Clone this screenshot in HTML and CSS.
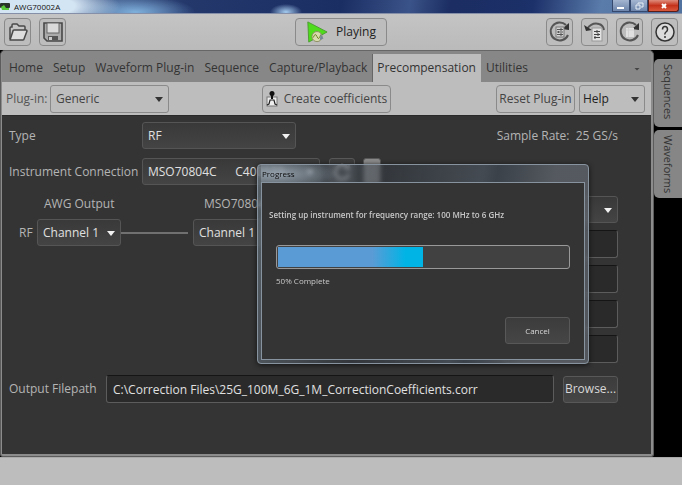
FILE: index.html
```html
<!DOCTYPE html>
<html lang="en">
<head>
<meta charset="utf-8">
<title>AWG70002A</title>
<link rel="stylesheet" href="styles.css">
</head>
<body>
<header class="titlebar">
  <svg class="app-icon" viewBox="0 0 10 9" aria-hidden="true"><rect y="1" width="10" height="5" rx="1" fill="#2a332a"/><path d="M1 5l3-2 2 3h3v2H2z" fill="#58c83a"/></svg>
  <span class="title">AWG70002A</span>
  <div class="caption">
    <button class="cap" aria-label="Minimize"><svg viewBox="0 0 10 8"><rect x="1" y="5" width="7" height="2" fill="#fff"/></svg></button>
    <button class="cap" aria-label="Restore"><svg viewBox="0 0 10 8"><path d="M4 2V1h5v4H7M2 3h4v4H2z" fill="none" stroke="#e8eef6"/></svg></button>
    <button class="cap cap-close" aria-label="Close"><svg viewBox="0 0 10 8"><path d="M3 2l4 4M7 2L3 6" stroke="#fff" stroke-width="2"/></svg></button>
  </div>
</header>

<div class="toolbar">
  <div class="tools">
    <button class="tool" aria-label="Open"><svg viewBox="0 0 24 24"><path d="M4 19V8q0-1 1-1h1V5q0-1 1-1h4l2 2h5q1 0 1 1v3" fill="#c6c6c6" stroke="#4a4a4a" stroke-width="1.5"/><path d="M4 20l3-9q0-1 1-1h12q1 0 1 1l-3 8q0 1-1 1z" fill="#dedede" stroke="#4a4a4a" stroke-width="1.5" stroke-linejoin="round"/></svg></button>
    <button class="tool" aria-label="Save"><svg viewBox="0 0 24 24"><path d="M3 3h18v18H6l-3-3z" fill="#aaa" stroke="#484848" stroke-width="1.6"/><rect x="6" y="3" width="12" height="10" fill="#dadada" stroke="#666"/><rect x="7" y="16" width="10" height="4" fill="#555"/><rect x="8" y="17" width="3" height="3" fill="#ccc"/></svg></button>
  </div>
  <button class="play"><svg viewBox="0 0 24 24"><path d="M2 1l21 11L3 23z" fill="#4fdc1c" stroke="#4a9a30"/><circle cx="12" cy="17" r="5.5" fill="#d9dcae" stroke="#8a8a60"/><path d="M8 18q2-6 4-1t4-2" fill="none" stroke="#67801a"/><path d="M16 14l3 5-4 2z" fill="#789"/></svg>Playing</button>
  <div class="tools tools-right">
    <button class="tool" aria-label="Restore setup"><svg viewBox="0 0 24 24"><path d="M18 5A9 9 0 1 0 20 15" fill="none" stroke="#555" stroke-width="2"/><path d="M14 9l7-6v7z" fill="#333"/><rect x="8" y="7" width="8" height="10" fill="#d4d4d4" stroke="#777"/><path d="M9 9.500h6M9 12h6M9 14.500h6M13 8v3M10.500 11v2M13 13v3" stroke="#555"/></svg></button>
    <button class="tool" aria-label="Last setup"><svg viewBox="0 0 24 24"><path d="M4 9Q9 2 16 4Q20 5 21 10" fill="none" stroke="#555" stroke-width="2"/><path d="M1 5l8 5-6 1z" fill="#333"/><rect x="9" y="8" width="10" height="13" fill="#e2e2e2" stroke="#999"/><path d="M11 11.500h6M11 14.500h6M11 17.500h6M14 10v3M15 13v3M12 16v3" stroke="#444"/></svg></button>
    <button class="tool" aria-label="Reset"><svg viewBox="0 0 24 24"><path d="M18 5A9 9 0 1 0 20 15" fill="none" stroke="#555" stroke-width="2"/><path d="M14 9l7-6v7z" fill="#333"/><rect x="8" y="8" width="8" height="9" fill="#e0e0e0"/><path d="M8 10h8M10.500 8v9" stroke="#d0d0d0"/></svg></button>
    <button class="tool" aria-label="Help"><svg viewBox="0 0 24 24"><circle cx="12" cy="12" r="9" fill="#dcdcdc" stroke="#333" stroke-width="1.500"/><path d="M9.500 9.500q0-3 2.500-3t2.500 3q0 1.500-1.500 2.500T12 14.500M12 16v2" fill="none" stroke="#333" stroke-width="1.500"/></svg></button>
  </div>
</div>

<div class="workspace">
  <main class="panel">
    <nav class="tabs">
      <a href="#">Home</a><a href="#">Setup</a><a href="#">Waveform Plug-in</a><a href="#">Sequence</a><a href="#">Capture/Playback</a><a href="#" class="active">Precompensation</a><a href="#">Utilities</a>
      <button class="more" aria-label="More tabs"></button>
    </nav>
    <div class="subbar">
      <label for="plugin">Plug-in:</label>
      <span class="select light plugin"><select id="plugin"><option>Generic</option></select></span>
      <button class="lbtn create"><svg viewBox="0 0 12 16"><rect x="1" y="6" width="10" height="9" fill="#eee" stroke="#777"/><circle cx="6" cy="2.500" r="2.500" fill="#111"/><path d="M6 4v4" stroke="#111" stroke-width="2"/><path d="M1 14l2-1 1-4h4l1 4 2 1" fill="none" stroke="#222" stroke-width="1.200"/></svg>Create coefficients</button>
      <button class="lbtn reset">Reset Plug-in</button>
      <span class="select light help"><select aria-label="Help"><option>Help</option></select></span>
    </div>
    <form class="content">
      <div class="row">
        <label class="lab" for="type">Type</label>
        <span class="select type"><select id="type"><option>RF</option></select></span>
        <span class="rate">Sample Rate:&nbsp; 25 GS/s</span>
      </div>
      <div class="row row-inst">
        <label class="lab" for="inst">Instrument Connection</label>
        <span class="select inst"><select id="inst"><option>MSO70804C &nbsp; &nbsp; &nbsp;C400123</option></select></span>
        <button type="button" class="dbtn refresh" aria-label="Refresh"><svg viewBox="0 0 20 20"><path d="M15 5A7 7 0 1 0 17 12" fill="none" stroke="#aaa" stroke-width="3"/><path d="M12 7l6-5v7z" fill="#aaa"/></svg></button>
        <button type="button" class="dbtn query" aria-label="Connection details"></button>
      </div>
      <div class="setup">
        <div class="channels">
          <span class="head head-awg">AWG Output</span>
          <span class="head head-mso">MSO70804C</span>
          <label class="rf" for="ch-a">RF</label>
          <span class="select"><select id="ch-a"><option>Channel 1</option></select></span>
          <span class="wire"></span>
          <span class="select"><select aria-label="MSO70804C channel"><option>Channel 1</option></select></span>
        </div>
        <div class="fields">
          <span class="select"><select aria-label="Mode"><option></option></select></span>
          <input type="text" aria-label="Start frequency">
          <input type="text" aria-label="Stop frequency">
          <input type="text" aria-label="Resolution">
          <input type="text" aria-label="Averages">
        </div>
      </div>
      <div class="row row-out">
        <label for="path">Output Filepath</label>
        <input id="path" type="text" value="C:\Correction Files\25G_100M_6G_1M_CorrectionCoefficients.corr">
        <button type="button" class="dbtn browse">Browse...</button>
      </div>
    </form>
    <section class="dialog" role="dialog" aria-labelledby="dlg">
      <h2 id="dlg">Progress</h2>
      <div class="dialog-body">
        <p class="message">Setting up instrument for frequency range: 100 MHz to 6 GHz</p>
        <div class="bar" role="progressbar" aria-valuenow="50" aria-valuemin="0" aria-valuemax="100"><div class="fill" style="width:50%"></div></div>
        <p class="percent">50% Complete</p>
        <button class="dbtn cancel">Cancel</button>
      </div>
    </section>
  </main>
  <aside class="rail"><button>Sequences</button><button>Waveforms</button></aside>
</div>
<footer class="status"></footer>
</body>
</html>
```
FILE: styles.css
```css
* { box-sizing: border-box; }
body {
  margin: 0;
  min-height: 100vh;
  display: flex;
  flex-direction: column;
  background: #bdbdbd;
  color: #333;
  font: 12px/18px "Open Sans", sans-serif;
}
button, input, select { font: inherit; color: inherit; margin: 0; }
button { white-space: nowrap; }
svg { display: block; flex: none; }

/* Window caption */
.titlebar {
  display: flex;
  align-items: center;
  height: 14px;
  border-bottom: 1px solid #8590a8;
  background:
    radial-gradient(ellipse 90px 24px at 30px 6px, #d3e4f2 50%, transparent),
    radial-gradient(ellipse 60px 16px at 135px 12px, #7fb0dc, transparent),
    radial-gradient(ellipse 16px 8px at 286px 12px, #a6cdf0, transparent),
    linear-gradient(100deg, #7394be 0, #24386c 27%, #1b2e64 50%, #3a5388 60%, #1b2d62 66%, #1c3069 78%, #5a7cab 88%, #51719f 100%);
}
.app-icon { width: 10px; height: 9px; }
.title { margin-left: 4px; font-size: 8px; line-height: 12px; color: #111; }
.caption { display: flex; margin-left: auto; align-self: flex-start; padding-right: 3px; }
.cap {
  display: flex;
  align-items: center;
  justify-content: center;
  width: 18px;
  height: 12px;
  padding: 0;
  border: 1px solid #35496e;
  border-top: 0;
  background: linear-gradient(#a3b5d0, #6d85ab);
}
.cap svg { width: 10px; height: 8px; }
.cap-close { width: 31px; background: linear-gradient(#de8d7c, #c5321c 50%, #d8583c); border-color: #5a1d18; border-radius: 0 0 3px 0; }

/* Main toolbar */
.toolbar {
  display: grid;
  grid-template-columns: 1fr auto 1fr;
  align-items: center;
  height: 36px;
  padding: 0 4px;
  background: linear-gradient(#c4c4c4, #bababa);
}
.tools { display: flex; gap: 8px; }
.tools-right { justify-content: flex-end; }
.tool, .play, .lbtn {
  display: flex;
  align-items: center;
  justify-content: center;
  height: 28px;
  padding: 0;
  border: 1px solid #8a8a8a;
  border-radius: 4px;
  background: #bdbdbd;
}
.tool { width: 27px; }
.tool svg { width: 24px; height: 24px; }
.play { width: 92px; gap: 8px; color: #222; }
.play svg { width: 22px; height: 22px; }

/* Workspace */
.workspace { flex: 1; display: flex; background: #000; }
.panel {
  position: relative;
  flex: 1;
  min-width: 0;
  display: flex;
  flex-direction: column;
  border: 1px solid #5c5c5c;
  border-top-color: #666;
  border-radius: 5px 5px 3px 3px;
  background: #8c8c8c;
  padding: 0 2px 2px 1px;
}
.tabs { display: flex; align-items: stretch; height: 31px; padding: 3px 8px 0 3px; border-radius: 4px 4px 0 0; background: #878787; }
.tabs a { display: flex; align-items: center; padding: 0 5px 0 4px; margin-right: 1px; color: #333; text-decoration: none; }
.tabs .active { margin-left: -1px; border-left: 1px solid #666; background: #bdbdbd; }
.more { margin-left: auto; width: 12px; padding: 0; border: 0; background: none; }
.more::after { content: ""; display: block; width: 6px; height: 3px; margin: 2px auto 0; background: #444; clip-path: polygon(0 0, 100% 0, 50% 100%); }
.subbar { display: flex; align-items: center; height: 33px; padding: 1px 6px 0 4px; background: #bdbdbd; }
.subbar label { width: 44px; color: #555; }
.lbtn { height: 28px; color: #444; }
.create { width: 129px; margin: 0 105px 0 auto; gap: 6px; }
.create svg { width: 12px; height: 16px; }
.reset { width: 79px; margin-right: 4px; }
.plugin { width: 119px; }
.help { width: 66px; }

/* Drop-downs */
.select { position: relative; display: block; height: 27px; }
.select select {
  appearance: none;
  display: block;
  width: 100%;
  height: 100%;
  padding: 0 18px 0 5px;
  border: 1px solid #555;
  border-radius: 3px;
  background: linear-gradient(#393939, #444);
  color: #e0e0e0;
}
.select::after {
  content: "";
  position: absolute;
  right: 6px;
  top: 12px;
  width: 8px;
  height: 5px;
  background: #f2f2f2;
  clip-path: polygon(0 0, 100% 0, 50% 100%);
  pointer-events: none;
}
.light.select { height: 28px; }
.light select { border-color: #8a8a8a; background: #bdbdbd; color: #444; }
.light::after { background: #333; }
.help select { padding-left: 3px; color: #222; }

/* Form */
.content { flex: 1; padding: 6px 33px 0 7px; background: #343434; color: #b4b4b4; border-top: 1px solid #2a2a2a; }
.row { display: flex; align-items: center; }
.lab { width: 133px; white-space: nowrap; }
.type { width: 154px; }
.rate { margin-left: auto; }
.row-inst { margin-top: 9px; }
.inst { width: 178px; margin-right: 9px; }
.dbtn {
  display: flex;
  align-items: center;
  justify-content: center;
  height: 27px;
  padding: 0;
  border: 1px solid #585858;
  border-radius: 3px;
  background: linear-gradient(#3c3c3c, #464646);
  color: #d8d8d8;
}
.refresh { width: 26px; margin-right: 8px; }
.refresh svg { width: 20px; height: 20px; }
.query { width: 18px; background: #8b8b8b; }
.setup { display: flex; justify-content: space-between; margin-top: 11px; }
.channels { display: grid; grid-template-columns: 28px 84px 72px 84px; align-content: start; row-gap: 7px; align-items: center; }
.head { line-height: 16px; }
.head-awg { grid-column: 2 / 4; padding-left: 7px; }
.head-mso { padding-left: 11px; }
.rf { padding-left: 10px; }
.wire { height: 2px; margin-right: 5px; background: #707070; }
.fields { display: grid; row-gap: 7px; width: 114px; }
.content input {
  height: 28px;
  min-width: 0;
  padding: 0 6px;
  border: 1px solid #5c5c5c;
  border-top-color: #151515;
  border-radius: 3px;
  background: #2a2a2a;
  color: #e0e0e0;
}
.row-out { margin-top: 12px; }
.row-out label { width: 97px; white-space: nowrap; }
.row-out input { flex: 1; }
.browse { width: 55px; margin-left: 9px; }

/* Progress window */
.dialog {
  position: absolute;
  left: 256px;
  top: 113px;
  width: 332px;
  padding: 0 3px 3px;
  border: 1px solid #8794a0;
  border-radius: 4px;
  background: linear-gradient(100deg, rgba(110, 124, 136, .6), rgba(52, 60, 70, .5) 35%, rgba(80, 90, 102, .6) 62%, rgba(62, 72, 82, .7) 66%, rgba(100, 105, 115, .7) 82%);
  backdrop-filter: blur(2px);
  box-shadow: 0 1px 5px #111;
  font-size: 8px;
  line-height: 16px;
}
.dialog h2 {
  margin: 0;
  padding-left: 1px;
  font: inherit;
  line-height: 17px;
  color: #0c0c0c;
  background: radial-gradient(ellipse 60px 14px at 16px 9px, rgba(160, 174, 186, .8), transparent);
}
.dialog-body { height: 178px; padding: 24px 14px 0 7px; border: 1px solid #8794a0; background: #343434; color: #c8c8c8; }
.dialog p { margin: 0; }
.message { font-weight: 600; }
.bar { height: 24px; margin: 22px 0 0 7px; padding: 1px; border: 1px solid #999; border-radius: 3px; background: #414141; }
.fill { height: 100%; background: linear-gradient(90deg, #5b9bd5 65%, #00b4e6 88%); }
.dialog .percent { margin: 4px 0 0 7px; }
.cancel { width: 65px; margin: 28px 0 0 auto; }

/* Side rail */
.rail { width: 28px; display: flex; flex-direction: column; gap: 3px; padding-top: 9px; }
.rail button {
  writing-mode: vertical-rl;
  width: 28px;
  height: 68px;
  padding: 5px 0 0;
  border: 0;
  border-radius: 5px 0 0 5px;
  background: #868686;
  color: #333;
  font-size: 11px;
  text-align: start;
}
.status { height: 28px; border-top: 1px solid #aaa; background: #bdbdbd; }
```
